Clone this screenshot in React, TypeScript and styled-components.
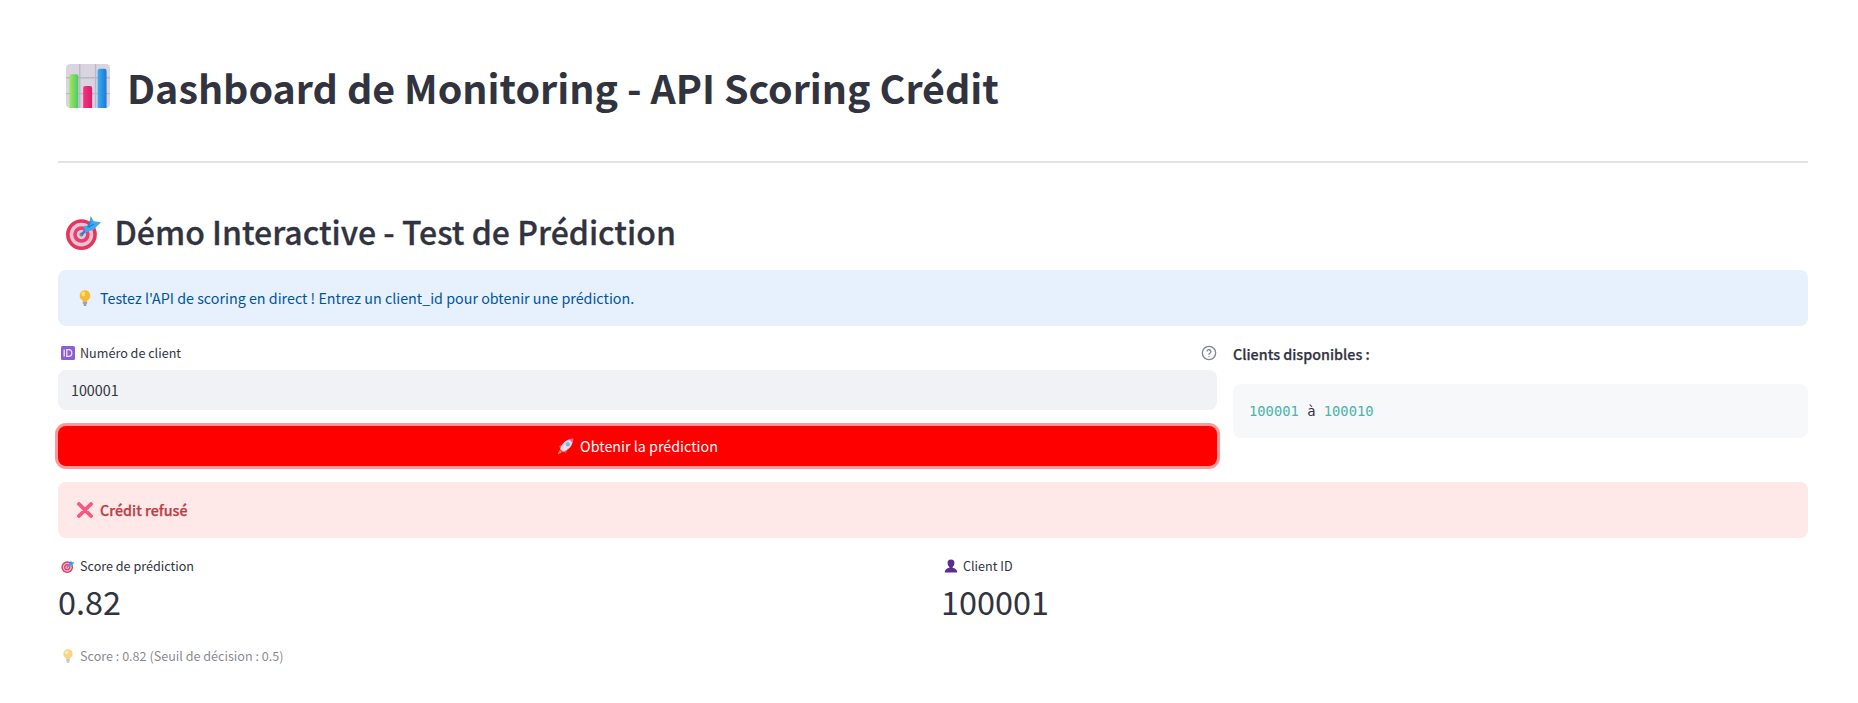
import React from "react";
import styled, { createGlobalStyle } from "styled-components";

const Global = createGlobalStyle`
  html, body { margin: 0; padding: 0; background: #fff; }
  body { font-family: "Noto Sans CJK JP", "Noto Sans", sans-serif; color: #31333f; }
`;

const Page = styled.main`
  padding: 57px 50px 0 58px;
  width: 1858px;
  height: 703px;
  box-sizing: border-box;
  overflow: hidden;
`;
const Title = styled.h1`
  margin: 0;
  display: flex;
  align-items: center;
  gap: 17px;
  height: 58px;
  padding-left: 8px;
  font-size: 39.4px;
  line-height: 55px;
  font-weight: 700;
  color: #31333f;
`;
const Divider = styled.hr`
  margin: 46px 0 0;
  border: 0;
  height: 2px;
  background: #e3e3e6;
`;
const Heading = styled.h2`
  margin: 46px 0 0;
  display: flex;
  align-items: center;
  gap: 12.5px;
  height: 44px;
  padding-left: 7px;
  font-size: 32px;
  line-height: 41px;
  font-weight: 500;
  -webkit-text-stroke: 0.3px #31333f;
`;
const Alert = styled.div<{ $bg: string; $fg: string; $bold?: boolean }>`
  margin-top: ${(p) => (p.$bold ? "16px" : "17px")};
  height: 56px;
  box-sizing: border-box;
  padding: 0 18px 0 19px;
  display: flex;
  align-items: center;
  gap: 7px;
  border-radius: 8px;
  background: ${(p) => p.$bg};
  color: ${(p) => p.$fg};
  font-size: 14.3px;
  line-height: 54px;
  font-weight: ${(p) => (p.$bold ? 500 : 400)};
  ${(p) => (p.$bold ? "-webkit-text-stroke: 0.25px currentColor;" : "")}
`;
const Columns = styled.div`
  display: grid;
  grid-template-columns: 1159px 575px;
  gap: 16px;
  margin-top: 15px;
`;
const Col = styled.div`
  display: flex;
  flex-direction: column;
`;
const LabelRow = styled.div`
  display: flex;
  align-items: center;
  justify-content: space-between;
  height: 22px;
  margin-top: 1px;
`;
const Label = styled.span`
  display: flex;
  align-items: center;
  gap: 5px;
  padding-left: 3px;
  font-size: 12.6px;
  line-height: 22px;
  color: #31333f;
`;
const Input = styled.div`
  margin-top: 6px;
  height: 40px;
  box-sizing: border-box;
  padding: 0 13px;
  display: flex;
  align-items: center;
  background: #f0f2f6;
  border-radius: 8px;
  font-size: 14.3px;
  line-height: 38px;
`;
const PrimaryButton = styled.button`
  margin-top: 16px;
  height: 40px;
  border: 0;
  border-radius: 8px;
  background: #ff0000;
  box-shadow: 0 0 0 3px rgba(255, 0, 0, 0.4);
  color: #fff;
  font: inherit;
  font-size: 14.3px;
  line-height: 38px;
  display: flex;
  align-items: center;
  justify-content: center;
  gap: 6px;
`;
const SideTitle = styled.p`
  margin: 1px 0 0;
  font-size: 14.3px;
  line-height: 24px;
  font-weight: 500;
  -webkit-text-stroke: 0.25px #31333f;
`;
const CodeBox = styled.div`
  margin-top: 18px;
  height: 54px;
  box-sizing: border-box;
  padding: 0 16px;
  display: flex;
  align-items: center;
  gap: 8.3px;
  background: #f7f8fa;
  border-radius: 8px;
  font-family: "DejaVu Sans Mono", "Liberation Mono", monospace;
  font-size: 13.8px;
  color: #31333f;
`;
const Teal = styled.span`
  color: #48b5aa;
`;
const Metrics = styled.div`
  display: grid;
  grid-template-columns: 1fr 1fr;
  gap: 16px;
  margin-top: 17px;
`;
const Metric = styled.div`
  display: flex;
  flex-direction: column;
`;
const MetricValue = styled.div`
  font-size: 32.4px;
  line-height: 48px;
`;
const Caption = styled.div`
  margin-top: 20px;
  display: flex;
  align-items: center;
  gap: 5px;
  padding-left: 3px;
  font-size: 12.6px;
  line-height: 22px;
  color: rgba(49, 51, 63, 0.6);
`;
const Faded = styled.span`
  opacity: 0.6;
  display: inline-flex;
`;

const ChartIcon = ({ size }: { size: number }) => (
  <svg width={size} height={size} viewBox="0 0 32 32" aria-hidden>
    <defs>
      <linearGradient id="g1" x1="0" y1="0" x2="1" y2="0"><stop offset="0" stopColor="#a4e85a" /><stop offset="1" stopColor="#4cc76e" /></linearGradient>
      <linearGradient id="g2" x1="0" y1="0" x2="1" y2="0"><stop offset="0" stopColor="#f5347f" /><stop offset="1" stopColor="#d81d6c" /></linearGradient>
      <linearGradient id="g3" x1="0" y1="0" x2="1" y2="0"><stop offset="0" stopColor="#36aef5" /><stop offset="1" stopColor="#1f78d1" /></linearGradient>
    </defs>
    <rect x="0" y="0" width="32" height="32" rx="3" fill="#d9d4e0" />
    <path d="M10 0v32M21.500 0v32M0 10h32M0 21.500h32" stroke="#bdb6c6" strokeWidth="1" />
    <path d="M2.500 9a1.500 1.500 0 0 1 1.500-1.500h3.500A1.500 1.500 0 0 1 9 9v23H2.500z" fill="url(#g1)" />
    <path d="M12.500 17.500a1.500 1.500 0 0 1 1.500-1.500h3.500a1.500 1.500 0 0 1 1.500 1.500V32h-6.500z" fill="url(#g2)" />
    <path d="M23 5a1.500 1.500 0 0 1 1.500-1.500H28A1.500 1.500 0 0 1 29.500 5v27H23z" fill="url(#g3)" />
  </svg>
);
const TargetIcon = ({ size }: { size: number }) => (
  <svg width={size} height={size} viewBox="0 0 36 36" aria-hidden>
    <circle cx="16" cy="21" r="15" fill="#e8335f" />
    <circle cx="16" cy="21" r="11.500" fill="#e6c4d2" />
    <circle cx="16" cy="21" r="8" fill="#ea3d72" />
    <circle cx="16" cy="21" r="4.500" fill="#d9ccd6" />
    <circle cx="16" cy="21" r="2" fill="#8b8590" />
    <path d="M16 21L27 10" stroke="#2f7fd0" strokeWidth="2.500" />
    <path d="M18 13l5-1 2-9 3 5 7 1-7 7-8 3z" fill="#3fa9f0" />
    <path d="M25 8l-3 6M28 11l-6 3" stroke="#1f7fd8" strokeWidth="1.200" />
  </svg>
);
const BulbIcon = ({ size }: { size: number }) => (
  <svg width={size} height={size} viewBox="0 0 16 16" aria-hidden>
    <path d="M8 .300a5.300 5.300 0 0 0-3.200 9.500c.7.600 1 1 1.100 2h4.200c.1-1 .4-1.400 1.100-2A5.300 5.300 0 0 0 8 .300z" fill="#fbb92e" />
    <ellipse cx="6.300" cy="4" rx="2" ry="2.300" fill="#ffe27a" />
    <rect x="5.900" y="11.500" width="4.200" height="3" rx=".8" fill="#a99bc0" />
    <rect x="6.800" y="14.500" width="2.400" height="1.200" rx=".5" fill="#7d6f96" />
  </svg>
);
const IdIcon = () => (
  <svg width="14" height="14" viewBox="0 0 14 14" aria-hidden>
    <rect width="14" height="14" rx="1.500" fill="#8a5fd6" />
    <path d="M3.200 3.500v7" stroke="#efe7fb" strokeWidth="1.300" />
    <path d="M5.800 3.700v6.600h1.700a3.300 3.300 0 0 0 0-6.600z" stroke="#efe7fb" strokeWidth="1.200" fill="none" />
  </svg>
);
const HelpIcon = () => (
  <svg width="16" height="16" viewBox="0 0 24 24" fill="none" stroke="#808495" strokeWidth="2" strokeLinecap="round" aria-hidden>
    <circle cx="12" cy="12" r="10" />
    <path d="M9.100 9a3 3 0 0 1 5.800 1c0 2-3 2.500-3 4" />
    <path d="M12 17.500h.01" />
  </svg>
);
const RocketIcon = () => (
  <svg width="17" height="17" viewBox="0 0 17 17" aria-hidden>
    <path d="M3 12C1.800 13 1 14.800 .8 16.200c1.400-.2 3.200-1 4.200-2.200z" fill="#f8903a" />
    <path d="M5 6.500 1.800 8.200 3.800 11zM10.500 12 8.800 15.200 6 13.200z" fill="#e8476a" />
    <path d="M3.200 11.200C4 6.200 9.300 .8 16.200 .8c0 6.900-5.400 12.200-10.400 13z" fill="#f0dbe8" />
    <circle cx="10.800" cy="6.200" r="2.200" fill="#7ab6ea" />
    <path d="M12 1.200c1.300-.3 2.800-.4 4.200-.4 0 1.400-.1 2.900-.4 4.200z" fill="#f0638c" />
  </svg>
);
const CrossIcon = () => (
  <svg width="16" height="16" viewBox="0 0 16 16" aria-hidden>
    <path d="M2 2l12 12M14 2L2 14" stroke="#f8577f" strokeWidth="3.800" strokeLinecap="round" />
  </svg>
);
const PersonIcon = () => (
  <svg width="14" height="14" viewBox="0 0 14 14" aria-hidden>
    <path d="M7 0.500a3.400 3.400 0 0 0-3.400 3.600C3.600 6 4.500 7.500 5.400 8v.8C3 9.400.8 10.500.8 13.500h12.400c0-3-2.200-4.100-4.600-4.700V8c.9-.5 1.800-2 1.800-3.900A3.400 3.400 0 0 0 7 .500z" fill="#5a2d91" />
  </svg>
);

export default function App() {
  return (
    <Page>
      <Global />
      <Title>
        <ChartIcon size={44} />
        <span>Dashboard de Monitoring - API Scoring Crédit</span>
      </Title>
      <Divider />
      <Heading>
        <TargetIcon size={37} />
        <span>Démo Interactive - Test de Prédiction</span>
      </Heading>
      <Alert $bg="#e6f1fd" $fg="#00549f">
        <BulbIcon size={16} />
        <span>Testez l'API de scoring en direct ! Entrez un client_id pour obtenir une prédiction.</span>
      </Alert>
      <Columns>
        <Col>
          <LabelRow>
            <Label><IdIcon />Numéro de client</Label>
            <HelpIcon />
          </LabelRow>
          <Input>100001</Input>
          <PrimaryButton type="button"><RocketIcon />Obtenir la prédiction</PrimaryButton>
        </Col>
        <Col>
          <SideTitle>Clients disponibles :</SideTitle>
          <CodeBox><Teal>100001</Teal>à<Teal>100010</Teal></CodeBox>
        </Col>
      </Columns>
      <Alert $bg="#fee8e8" $fg="#bd3c46" $bold>
        <CrossIcon />
        <span>Crédit refusé</span>
      </Alert>
      <Metrics>
        <Metric>
          <Label><TargetIcon size={14} />Score de prédiction</Label>
          <MetricValue>0.82</MetricValue>
        </Metric>
        <Metric>
          <Label><PersonIcon />Client ID</Label>
          <MetricValue>100001</MetricValue>
        </Metric>
      </Metrics>
      <Caption>
        <Faded><BulbIcon size={14} /></Faded>
        <span>Score : 0.82 (Seuil de décision : 0.5)</span>
      </Caption>
    </Page>
  );
}
